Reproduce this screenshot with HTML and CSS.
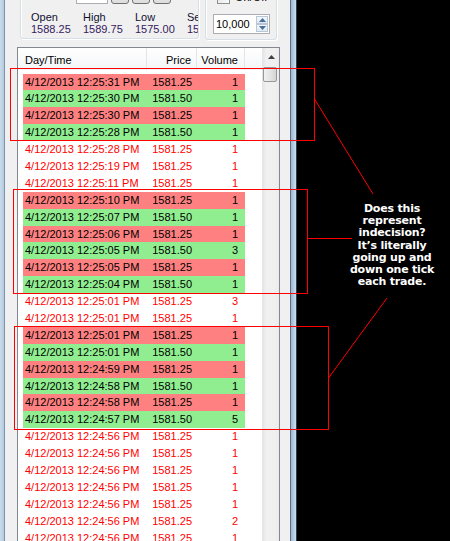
FILE: index.html
```html
<!DOCTYPE html>
<html>
<head>
<meta charset="utf-8">
<link rel="stylesheet" href="styles.css">
</head>
<body>
<div class="screen">
  <div class="window">
    <div class="frame-left"></div>
    <div class="client">
      <div class="top">
        <div class="group group1">
          <div class="btnrow">
            <div class="tbox"></div>
            <div class="tbtn"></div>
            <div class="tbtn"></div>
            <div class="tbtn"></div>
          </div>
          <div class="stats">
            <div class="stat"><div class="lbl">Open</div><div class="val">1588.25</div></div>
            <div class="stat"><div class="lbl">High</div><div class="val">1589.75</div></div>
            <div class="stat"><div class="lbl">Low</div><div class="val">1575.00</div></div>
            <div class="stat stat-cut"><div class="lbl">Se</div><div class="val">15</div></div>
          </div>
        </div>
        <div class="group group2">
          <div class="chkrow"><span class="chk"></span><span class="chklbl">On/Off</span></div>
          <div class="spin">
            <span class="spinval">10,000</span>
            <span class="spinbtns">
              <span class="spinbtn"><svg width="7" height="4" viewBox="0 0 7 4"><polygon points="0,4 7,4 3.5,0" fill="#4a6d9a"/></svg></span>
              <span class="spinbtn"><svg width="7" height="4" viewBox="0 0 7 4"><polygon points="0,0 7,0 3.5,4" fill="#4a6d9a"/></svg></span>
            </span>
          </div>
        </div>
      </div>
      <div class="list">
        <div class="list-body">
          <div class="header">
            <div class="h-date">Day/Time</div>
            <div class="h-price">Price</div>
            <div class="h-vol">Volume</div>
            <div class="h-fill"></div>
          </div>
          <div class="rows">
            <div class="row sell"><span class="c-date">4/12/2013 12:25:31 PM</span><span class="c-price">1581.25</span><span class="c-vol">1</span></div>
            <div class="row buy"><span class="c-date">4/12/2013 12:25:30 PM</span><span class="c-price">1581.50</span><span class="c-vol">1</span></div>
            <div class="row sell"><span class="c-date">4/12/2013 12:25:30 PM</span><span class="c-price">1581.25</span><span class="c-vol">1</span></div>
            <div class="row buy"><span class="c-date">4/12/2013 12:25:28 PM</span><span class="c-price">1581.50</span><span class="c-vol">1</span></div>
            <div class="row tick"><span class="c-date">4/12/2013 12:25:28 PM</span><span class="c-price">1581.25</span><span class="c-vol">1</span></div>
            <div class="row tick"><span class="c-date">4/12/2013 12:25:19 PM</span><span class="c-price">1581.25</span><span class="c-vol">1</span></div>
            <div class="row tick"><span class="c-date">4/12/2013 12:25:11 PM</span><span class="c-price">1581.25</span><span class="c-vol">1</span></div>
            <div class="row sell"><span class="c-date">4/12/2013 12:25:10 PM</span><span class="c-price">1581.25</span><span class="c-vol">1</span></div>
            <div class="row buy"><span class="c-date">4/12/2013 12:25:07 PM</span><span class="c-price">1581.50</span><span class="c-vol">1</span></div>
            <div class="row sell"><span class="c-date">4/12/2013 12:25:06 PM</span><span class="c-price">1581.25</span><span class="c-vol">1</span></div>
            <div class="row buy"><span class="c-date">4/12/2013 12:25:05 PM</span><span class="c-price">1581.50</span><span class="c-vol">3</span></div>
            <div class="row sell"><span class="c-date">4/12/2013 12:25:05 PM</span><span class="c-price">1581.25</span><span class="c-vol">1</span></div>
            <div class="row buy"><span class="c-date">4/12/2013 12:25:04 PM</span><span class="c-price">1581.50</span><span class="c-vol">1</span></div>
            <div class="row tick"><span class="c-date">4/12/2013 12:25:01 PM</span><span class="c-price">1581.25</span><span class="c-vol">3</span></div>
            <div class="row tick"><span class="c-date">4/12/2013 12:25:01 PM</span><span class="c-price">1581.25</span><span class="c-vol">1</span></div>
            <div class="row sell"><span class="c-date">4/12/2013 12:25:01 PM</span><span class="c-price">1581.25</span><span class="c-vol">1</span></div>
            <div class="row buy"><span class="c-date">4/12/2013 12:25:01 PM</span><span class="c-price">1581.50</span><span class="c-vol">1</span></div>
            <div class="row sell"><span class="c-date">4/12/2013 12:24:59 PM</span><span class="c-price">1581.25</span><span class="c-vol">1</span></div>
            <div class="row buy"><span class="c-date">4/12/2013 12:24:58 PM</span><span class="c-price">1581.50</span><span class="c-vol">1</span></div>
            <div class="row sell"><span class="c-date">4/12/2013 12:24:58 PM</span><span class="c-price">1581.25</span><span class="c-vol">1</span></div>
            <div class="row buy"><span class="c-date">4/12/2013 12:24:57 PM</span><span class="c-price">1581.50</span><span class="c-vol">5</span></div>
            <div class="row tick"><span class="c-date">4/12/2013 12:24:56 PM</span><span class="c-price">1581.25</span><span class="c-vol">1</span></div>
            <div class="row tick"><span class="c-date">4/12/2013 12:24:56 PM</span><span class="c-price">1581.25</span><span class="c-vol">1</span></div>
            <div class="row tick"><span class="c-date">4/12/2013 12:24:56 PM</span><span class="c-price">1581.25</span><span class="c-vol">1</span></div>
            <div class="row tick"><span class="c-date">4/12/2013 12:24:56 PM</span><span class="c-price">1581.25</span><span class="c-vol">1</span></div>
            <div class="row tick"><span class="c-date">4/12/2013 12:24:56 PM</span><span class="c-price">1581.25</span><span class="c-vol">1</span></div>
            <div class="row tick"><span class="c-date">4/12/2013 12:24:56 PM</span><span class="c-price">1581.25</span><span class="c-vol">2</span></div>
            <div class="row tick"><span class="c-date">4/12/2013 12:24:56 PM</span><span class="c-price">1581.25</span><span class="c-vol">1</span></div>
          </div>
        </div>
        <div class="scrollbar">
          <div class="sb-up"><svg width="7" height="4" viewBox="0 0 7 4"><polygon points="0,4 7,4 3.5,0" fill="#404040"/></svg></div>
          <div class="sb-thumb"></div>
        </div>
      </div>
    </div>
    <div class="frame-right"></div>
  </div>
  <div class="canvas">
    <div class="callout">Does this<br>represent<br>indecision?<br>It’s literally<br>going up and<br>down one tick<br>each trade.</div>
  </div>
  <svg class="marks" width="450" height="541" viewBox="0 0 450 541">
    <rect x="10.5" y="68.5" width="304" height="72" fill="none" stroke="#ff0000" stroke-width="1"/>
    <rect x="13.5" y="189.5" width="294" height="104" fill="none" stroke="#ff0000" stroke-width="1"/>
    <rect x="14.5" y="326.5" width="314" height="103" fill="none" stroke="#ff0000" stroke-width="1"/>
    <line x1="314.5" y1="99" x2="373" y2="194" stroke="#ff0000" stroke-width="1"/>
    <line x1="307.5" y1="238.5" x2="352" y2="238.5" stroke="#ff0000" stroke-width="1"/>
    <line x1="387" y1="298" x2="328.5" y2="378" stroke="#ff0000" stroke-width="1"/>
  </svg>
</div>
</body>
</html>
```
FILE: styles.css
```css
* { box-sizing: border-box; }
html, body { margin: 0; padding: 0; }
body {
  background: #000;
  width: 450px;
  height: 541px;
  overflow: hidden;
  font-family: "Liberation Sans", Arial, sans-serif;
  font-size: 11px;
}
.screen {
  position: relative;
  display: flex;
  width: 450px;
  height: 541px;
  overflow: hidden;
}
.window {
  display: flex;
  width: 297px;
  height: 541px;
  flex: none;
}
.frame-left {
  width: 5px;
  background: linear-gradient(to right, #c9daec, #b6cbe1);
  border-right: 1px solid #7d91a6;
}
.client {
  width: 285px;
  background: #f0f0f0;
}
.frame-right {
  width: 7px;
  border-left: 1px solid #5a6f84;
  border-right: 1px solid #2f3c49;
  background: linear-gradient(to right, #9ab7d4, #cddff0);
}

/* top panel */
.top {
  height: 47px;
  display: flex;
  gap: 6px;
  padding-left: 15px;
}
.group {
  margin-top: -20px;
  border: 1px solid #d5dfe5;
  border-radius: 3px;
  box-shadow: inset 1px 1px 0 #fff, 1px 1px 0 #fff;
  overflow: hidden;
}
.group1 {
  width: 179px;
  height: 59px;
  padding: 2px 0 0 10px;
}
.btnrow {
  display: flex;
  height: 21px;
  padding-left: 45px;
  gap: 3px;
}
.tbox {
  width: 32px;
  background: #fff;
  border: 1px solid #abadb3;
}
.tbtn {
  width: 18px;
  border: 1px solid #707070;
  border-radius: 3px;
  background: linear-gradient(#f2f2f2, #dddddd);
}
.stats {
  display: flex;
  margin-top: 7px;
}
.stat {
  width: 52px;
  flex: none;
  line-height: 12px;
  white-space: nowrap;
}
.stat-cut {
  width: 11px;
  overflow: hidden;
}
.lbl { color: #101030; }
.val { color: #34205e; }

.group2 {
  width: 72px;
  height: 60px;
  padding: 10px 0 0 7px;
}
.chkrow {
  display: flex;
  align-items: center;
  gap: 5px;
  height: 13px;
  padding-left: 4px;
}
.chk {
  width: 13px;
  height: 13px;
  border: 1px solid #8e8f8f;
  background: linear-gradient(135deg, #dcdcdc, #fdfdfd);
}
.chklbl { color: #000; line-height: 13px; }
.spin {
  margin-top: 10px;
  width: 57px;
  height: 20px;
  border: 1px solid #abadb3;
  background: #fff;
  display: flex;
  justify-content: space-between;
}
.spinval {
  padding-left: 2px;
  line-height: 18px;
  color: #000;
}
.spinbtns {
  display: flex;
  flex-direction: column;
  width: 12px;
  margin: 1px 1px 1px 0;
}
.spinbtn {
  flex: 1;
  display: flex;
  align-items: center;
  justify-content: center;
  border: 1px solid #b9c6d6;
  background: linear-gradient(#f4f8fc, #dfe8f2);
}

/* list */
.list {
  margin-left: 12px;
  width: 263px;
  height: 494px;
  border: 1px solid #828790;
  border-bottom: none;
  background: #fff;
  display: flex;
  overflow: hidden;
}
.list-body {
  width: 244px;
  flex: none;
}
.header {
  display: flex;
  height: 22px;
  background: linear-gradient(#ffffff, #f4f5f7);
  color: #000;
  line-height: 12px;
}
.header > div {
  border-right: 1px solid #e5e5e5;
  height: 22px;
  padding-top: 6px;
}
.h-date { width: 129px; padding-left: 7px; }
.h-price { width: 50px; text-align: right; padding-right: 5px; }
.h-vol { width: 48px; text-align: right; padding-right: 6px; }
.header > .h-fill { flex: 1; border-right: none; }

.rows { padding-top: 3.5px; }
.row {
  display: flex;
  height: 16.9px;
  line-height: 16.9px;
  margin-left: 5px;
  width: 222px;
  white-space: nowrap;
  color: #000;
}
.c-date { width: 124px; padding-left: 2px; }
.c-price { width: 50px; text-align: right; padding-right: 5px; }
.c-vol { width: 48px; text-align: right; padding-right: 7px; }
.sell { background: #ff8080; }
.buy { background: #90ee90; }
.tick { color: #ff0000; }

.scrollbar {
  width: 17px;
  flex: none;
  background: linear-gradient(to right, #e3e3e3, #f0f0f0 25%, #f0f0f0 75%, #ebebeb);
}
.sb-up {
  height: 17px;
  display: flex;
  align-items: center;
  justify-content: center;
  padding-left: 1px;
}
.sb-thumb {
  margin: 2px 0 0 1px;
  width: 14px;
  height: 15px;
  border: 1px solid #979797;
  border-radius: 2px;
  background: linear-gradient(to right, #f1f1f1, #e4e4e4 50%, #d4d4d4);
}

/* right canvas */
.canvas {
  flex: 1;
  background: #000;
  padding-top: 203px;
}
.callout {
  width: 120px;
  margin-left: 35px;
  text-align: center;
  color: #fff;
  font-family: "DejaVu Sans", sans-serif;
  font-weight: bold;
  font-size: 11px;
  letter-spacing: -0.2px;
  line-height: 12.2px;
}
.marks {
  position: absolute;
  left: 0;
  top: 0;
  pointer-events: none;
}
```
